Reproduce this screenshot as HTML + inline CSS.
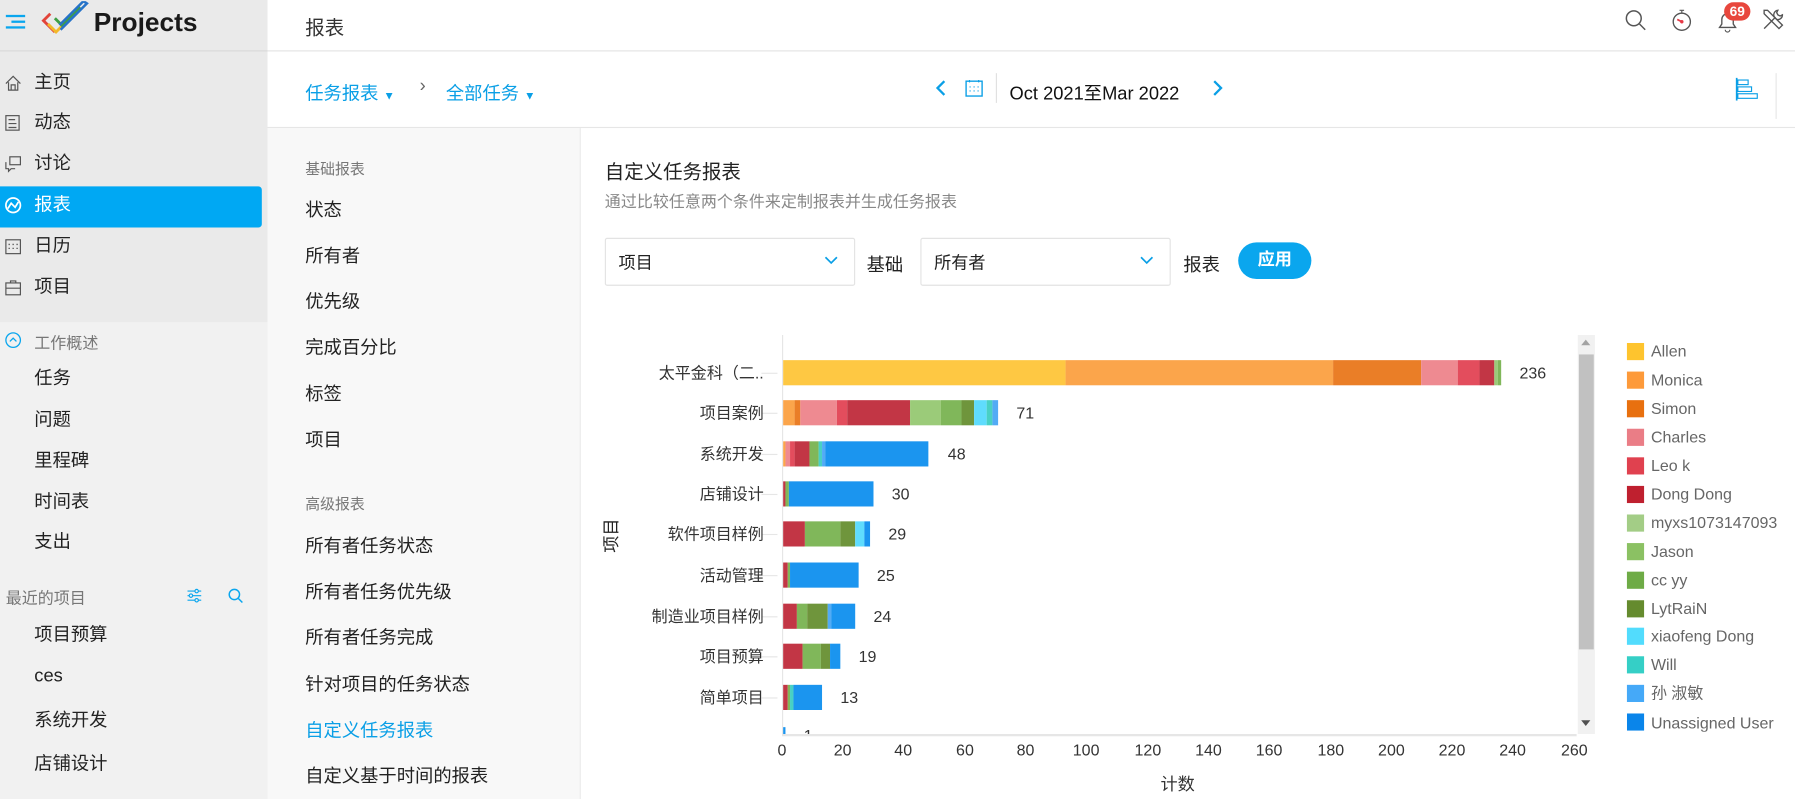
<!DOCTYPE html>
<html><head><meta charset="utf-8">
<style>
html,body{margin:0;padding:0;width:1795px;height:799px;overflow:hidden;background:#fff}
#w{position:absolute;left:0;top:0;width:1570px;height:699px;transform:scale(1.14331);transform-origin:0 0;font-family:"Liberation Sans","Noto Sans CJK SC",sans-serif;color:#222}
.a{position:absolute;white-space:nowrap}
.nav{position:absolute;left:30px;font-size:16px;color:#222;line-height:20px}
.sub{position:absolute;left:267px;font-size:16px;color:#222;line-height:20px}
.ic{position:absolute;left:4px;width:15px;height:15px}
.seg{position:absolute;height:22px}
.lbl{position:absolute;right:902px;font-size:14px;color:#333;line-height:18px;text-align:right}
.val{position:absolute;font-size:14px;color:#333;line-height:18px}
.tick{position:absolute;left:666px;width:14px;height:1px;background:#e6e6e6}
.xl{position:absolute;top:648px;font-size:14px;color:#333;width:40px;text-align:center;margin-left:-20px}
.lg{position:absolute;left:1423px;width:15px;height:15px}
.lt{position:absolute;left:1444px;font-size:14px;color:#666;line-height:16px}
</style></head><body><div id="w">
<div class="a" style="left:0;top:0;width:234px;height:282px;background:#eaeaea"></div>
<div class="a" style="left:0;top:282px;width:234px;height:417px;background:#f1f1f1"></div>
<div class="a" style="left:0;top:44px;width:234px;height:1px;background:#d8d8d8"></div>
<svg class="a" style="left:5px;top:12px" width="18" height="14"><rect x="0" y="1" width="17" height="2" fill="#0aa6ee"/><rect x="5" y="6" width="12" height="2" fill="#0aa6ee"/><rect x="0" y="11" width="17" height="2" fill="#0aa6ee"/></svg>
<svg class="a" style="left:36px;top:1px" width="42" height="36" viewBox="0 0 42 36"><path d="M8 11 L2 17 L12 27" fill="none" stroke="#e2443a" stroke-width="2.5"/><path d="M6 20 L13 27 L19 21" fill="none" stroke="#f2b92a" stroke-width="2.5"/><path d="M12 15 L18 21 L34 5" fill="none" stroke="#3f9f45" stroke-width="2.5"/><path d="M17 25 L40 2 L37 0 L16 21" fill="none" stroke="#2673c9" stroke-width="2.2"/></svg>
<div class="a" style="left:82px;top:6px;font-size:23px;font-weight:bold;color:#1a1a1a">Projects</div>
<div class="a" style="left:0;top:163px;width:229px;height:36px;background:#00a8f3;border-radius:0 3px 3px 0"></div>
<svg class="ic" style="top:65px" viewBox="0 0 13 13"><path d="M1 7 L6.5 1.5 L12 7 M3 6 V12 H10 V6 M5 12 V8 H8 V12" fill="none" stroke="#555" stroke-width="0.9"/></svg>
<svg class="ic" style="top:100px" viewBox="0 0 13 13"><rect x="1" y="1" width="10" height="11" fill="none" stroke="#555" stroke-width="0.9"/><path d="M3 4H8 M3 7H9 M3 10H9" stroke="#555" stroke-width="0.9"/></svg>
<svg class="ic" style="top:136px" viewBox="0 0 13 13"><rect x="4" y="1" width="8" height="6" fill="none" stroke="#555" stroke-width="0.9"/><path d="M1 5 V10 H3 V12 L5 10 H8" fill="none" stroke="#555" stroke-width="0.9"/></svg>
<svg class="ic" style="top:172px" viewBox="0 0 13 13"><circle cx="6.5" cy="6.5" r="5.5" fill="none" stroke="#fff" stroke-width="1.3"/><path d="M2.5 9 L5 5 L8 8 L10.5 4" fill="none" stroke="#fff" stroke-width="1.3"/></svg>
<svg class="ic" style="top:208px" viewBox="0 0 13 13"><rect x="1" y="1.5" width="11" height="10.5" fill="none" stroke="#555" stroke-width="0.9"/><path d="M3 5h1M6 5h1M9 5h1M3 8h1M6 8h1M9 8h1" stroke="#555"/></svg>
<svg class="ic" style="top:244px" viewBox="0 0 13 13"><rect x="1" y="3" width="11" height="9" fill="none" stroke="#555" stroke-width="0.9"/><path d="M4.5 3V1.5H8.5V3M1 7H12" fill="none" stroke="#555" stroke-width="0.9"/></svg>
<div class="nav" style="top:63px">主页</div>
<div class="nav" style="top:98px">动态</div>
<div class="nav" style="top:134px">讨论</div>
<div class="nav" style="top:170px;color:#fff">报表</div>
<div class="nav" style="top:206px">日历</div>
<div class="nav" style="top:242px">项目</div>
<svg class="ic" style="top:290px" viewBox="0 0 13 13"><circle cx="6.5" cy="6.5" r="5.5" fill="none" stroke="#0aa6ee"/><path d="M4 7.5 L6.5 5 L9 7.5" fill="none" stroke="#0aa6ee"/></svg>
<div class="a" style="left:30px;top:290px;font-size:14px;color:#777">工作概述</div>
<div class="nav" style="top:322px">任务</div>
<div class="nav" style="top:358px">问题</div>
<div class="nav" style="top:394px">里程碑</div>
<div class="nav" style="top:430px">时间表</div>
<div class="nav" style="top:465px">支出</div>
<div class="a" style="left:5px;top:513px;font-size:14px;color:#777">最近的项目</div>
<svg class="a" style="left:163px;top:514px" width="14" height="13"><path d="M1 3H13M1 7H13M1 11H13" stroke="#0aa6ee"/><circle cx="9" cy="3" r="1.5" fill="#f1f1f1" stroke="#0aa6ee"/><circle cx="4" cy="7" r="1.5" fill="#f1f1f1" stroke="#0aa6ee"/><circle cx="9" cy="11" r="1.5" fill="#f1f1f1" stroke="#0aa6ee"/></svg>
<svg class="a" style="left:199px;top:514px" width="14" height="14"><circle cx="6" cy="6" r="4.5" fill="none" stroke="#0aa6ee" stroke-width="1.3"/><path d="M9.5 9.5L13 13" stroke="#0aa6ee" stroke-width="1.3"/></svg>
<div class="nav" style="top:546px">项目预算</div>
<div class="nav" style="top:582px">ces</div>
<div class="nav" style="top:621px">系统开发</div>
<div class="nav" style="top:659px">店铺设计</div>

<div class="a" style="left:234px;top:44px;width:1336px;height:1px;background:#e3e3e3"></div>
<div class="a" style="left:267px;top:10px;font-size:17px;color:#333">报表</div>
<svg class="a" style="left:1421px;top:8px" width="20" height="20"><circle cx="8" cy="8" r="6.5" fill="none" stroke="#555" stroke-width="1.3"/><path d="M13 13L18 18" stroke="#555" stroke-width="1.3"/></svg>
<svg class="a" style="left:1461px;top:7px" width="20" height="22"><circle cx="10" cy="12" r="7.5" fill="none" stroke="#555" stroke-width="1.2"/><path d="M8 2H12M10 2V4.5" stroke="#555"/><path d="M6 10L10 12" stroke="#e63946" stroke-width="1.5"/><circle cx="10" cy="12" r="1.5" fill="#e63946"/></svg>
<svg class="a" style="left:1500px;top:8px" width="22" height="22"><path d="M4 16H18L16 13V9A5 5 0 0 0 6 9V13Z" fill="none" stroke="#555" stroke-width="1.2"/><path d="M9 18A2 2 0 0 0 13 18" fill="none" stroke="#555"/></svg>
<div class="a" style="left:1508px;top:2px;width:23px;height:16px;border-radius:8px;background:#e8473d;color:#fff;font-size:12px;font-weight:bold;text-align:center;line-height:16px">69</div>
<svg class="a" style="left:1541px;top:7px" width="20" height="20"><path d="M2 18L12 8M14 2A4 4 0 0 0 11 8L13 10A4 4 0 0 0 18 6L16 7L14 6L13 4Z" fill="none" stroke="#555" stroke-width="1.2"/><path d="M2 2L5 2L18 15L15 18L2 5Z" fill="none" stroke="#555" stroke-width="1.2"/></svg>

<div class="a" style="left:234px;top:111px;width:1336px;height:1px;background:#e6e6e6"></div>
<div class="a" style="left:267px;top:68px;font-size:16px;color:#0a9fe6">任务报表 <span style="font-size:10px">▼</span></div>
<div class="a" style="left:367px;top:67px;font-size:16px;color:#666">›</div>
<div class="a" style="left:390px;top:68px;font-size:16px;color:#0a9fe6">全部任务 <span style="font-size:10px">▼</span></div>
<svg class="a" style="left:818px;top:69px" width="10" height="16"><path d="M8 2L2 8L8 14" fill="none" stroke="#0a9fe6" stroke-width="2"/></svg>
<svg class="a" style="left:844px;top:69px" width="16" height="16"><rect x="1" y="2" width="14" height="13" fill="none" stroke="#0a9fe6" stroke-width="1.2"/><path d="M4 7h1M7.5 7h1M11 7h1M4 10.5h1M7.5 10.5h1M11 10.5h1M4 1V3M12 1V3" stroke="#0a9fe6"/></svg>
<div class="a" style="left:871px;top:64px;width:1px;height:26px;background:#e0e0e0"></div>
<div class="a" style="left:883px;top:68px;font-size:16px;color:#111">Oct 2021至Mar 2022</div>
<svg class="a" style="left:1060px;top:69px" width="10" height="16"><path d="M2 2L8 8L2 14" fill="none" stroke="#0a9fe6" stroke-width="2"/></svg>
<svg class="a" style="left:1518px;top:68px" width="20" height="20"><path d="M1 0V20" stroke="#0a9fe6" stroke-width="1.5"/><rect x="2" y="2" width="9" height="4" fill="none" stroke="#0a9fe6"/><rect x="2" y="8" width="12" height="4" fill="none" stroke="#0a9fe6"/><rect x="2" y="14" width="17" height="4" fill="none" stroke="#0a9fe6"/></svg>
<div class="a" style="left:1553px;top:64px;width:1px;height:40px;background:#e6e6e6"></div>

<div class="a" style="left:234px;top:112px;width:273px;height:587px;background:#f8f8f8;border-right:1px solid #ececec"></div>
<div class="a" style="left:267px;top:137px;font-size:13px;color:#777">基础报表</div>
<div class="sub" style="top:175px">状态</div>
<div class="sub" style="top:215px">所有者</div>
<div class="sub" style="top:255px">优先级</div>
<div class="sub" style="top:295px">完成百分比</div>
<div class="sub" style="top:336px">标签</div>
<div class="sub" style="top:376px">项目</div>
<div class="a" style="left:267px;top:430px;font-size:13px;color:#777">高级报表</div>
<div class="sub" style="top:469px">所有者任务状态</div>
<div class="sub" style="top:509px">所有者任务优先级</div>
<div class="sub" style="top:549px">所有者任务完成</div>
<div class="sub" style="top:590px">针对项目的任务状态</div>
<div class="sub" style="top:630px;color:#0a9fe6">自定义任务报表</div>
<div class="sub" style="top:670px">自定义基于时间的报表</div>

<div class="a" style="left:529px;top:136px;font-size:17px;color:#222">自定义任务报表</div>
<div class="a" style="left:529px;top:166px;font-size:14px;color:#888">通过比较任意两个条件来定制报表并生成任务报表</div>
<div class="a" style="left:529px;top:208px;width:217px;height:40px;border:1px solid #e3e3e3;border-radius:2px"></div>
<div class="a" style="left:541px;top:219px;font-size:15px">项目</div>
<svg class="a" style="left:721px;top:224px" width="12" height="8"><path d="M1 1L6 6L11 1" fill="none" stroke="#0a9fe6" stroke-width="1.5"/></svg>
<div class="a" style="left:758px;top:218px;font-size:16px">基础</div>
<div class="a" style="left:805px;top:208px;width:217px;height:40px;border:1px solid #e3e3e3;border-radius:2px"></div>
<div class="a" style="left:817px;top:219px;font-size:15px">所有者</div>
<svg class="a" style="left:997px;top:224px" width="12" height="8"><path d="M1 1L6 6L11 1" fill="none" stroke="#0a9fe6" stroke-width="1.5"/></svg>
<div class="a" style="left:1035px;top:218px;font-size:16px">报表</div>
<div class="a" style="left:1083px;top:212px;width:64px;height:32px;border-radius:16px;background:#0aa6ee;color:#fff;font-size:15px;font-weight:bold;text-align:center;line-height:32px">应用</div>

<div class="a" style="left:684px;top:293px;width:1px;height:349px;background:#e6e6e6"></div>
<div class="a" style="left:684px;top:642px;width:695px;height:2px;background:#e6e6e6"></div>
<div class="a" style="left:1380px;top:293px;width:15px;height:349px;background:#f1f1f1"></div>
<div class="a" style="left:1381px;top:310px;width:13px;height:258px;background:#c1c1c1"></div>
<div class="a" style="left:1383px;top:297px;width:0;height:0;border:4px solid transparent;border-bottom:5px solid #a3a3a3;border-top:0"></div>
<div class="a" style="left:1383px;top:630px;width:0;height:0;border:4px solid transparent;border-top:5px solid #505050;border-bottom:0"></div>
<div class="a" style="left:519px;top:458px;font-size:15px;transform:rotate(-90deg);transform-origin:center">项目</div>
<div class="a" style="left:1015px;top:675px;font-size:15px;color:#333">计数</div>

<div class="tick" style="top:326px"></div><div class="tick" style="top:361px"></div><div class="tick" style="top:397px"></div><div class="tick" style="top:432px"></div><div class="tick" style="top:467px"></div><div class="tick" style="top:503px"></div><div class="tick" style="top:539px"></div><div class="tick" style="top:574px"></div><div class="tick" style="top:610px"></div>
<div class="lbl" style="top:317px">太平金科（二..</div>
<div class="lbl" style="top:352px">项目案例</div>
<div class="lbl" style="top:388px">系统开发</div>
<div class="lbl" style="top:423px">店铺设计</div>
<div class="lbl" style="top:458px">软件项目样例</div>
<div class="lbl" style="top:494px">活动管理</div>
<div class="lbl" style="top:530px">制造业项目样例</div>
<div class="lbl" style="top:565px">项目预算</div>
<div class="lbl" style="top:601px">简单项目</div>

<div class="seg" style="top:315px;left:685px;width:247px;background:#fec843"></div>
<div class="seg" style="top:315px;left:932px;width:234px;background:#fba54b"></div>
<div class="seg" style="top:315px;left:1166px;width:77px;background:#ea7e27"></div>
<div class="seg" style="top:315px;left:1243px;width:32px;background:#ee8a91"></div>
<div class="seg" style="top:315px;left:1275px;width:19px;background:#e34d5d"></div>
<div class="seg" style="top:315px;left:1294px;width:13px;background:#c23645"></div>
<div class="seg" style="top:315px;left:1307px;width:3px;background:#9bcb79"></div>
<div class="seg" style="top:315px;left:1310px;width:3px;background:#80b75a"></div>
<div class="val" style="top:317px;left:1329px">236</div>
<div class="seg" style="top:350px;left:685px;width:10px;background:#fba54b"></div>
<div class="seg" style="top:350px;left:695px;width:5px;background:#ea7e27"></div>
<div class="seg" style="top:350px;left:700px;width:32px;background:#ee8a91"></div>
<div class="seg" style="top:350px;left:732px;width:9px;background:#e34d5d"></div>
<div class="seg" style="top:350px;left:741px;width:55px;background:#c23645"></div>
<div class="seg" style="top:350px;left:796px;width:27px;background:#9bcb79"></div>
<div class="seg" style="top:350px;left:823px;width:18px;background:#80b75a"></div>
<div class="seg" style="top:350px;left:841px;width:11px;background:#6f953c"></div>
<div class="seg" style="top:350px;left:852px;width:11px;background:#5fdcfd"></div>
<div class="seg" style="top:350px;left:863px;width:5px;background:#48d0c4"></div>
<div class="seg" style="top:350px;left:868px;width:5px;background:#52abf5"></div>
<div class="val" style="top:352px;left:889px">71</div>
<div class="seg" style="top:386px;left:685px;width:2px;background:#fba54b"></div>
<div class="seg" style="top:386px;left:687px;width:4px;background:#ee8a91"></div>
<div class="seg" style="top:386px;left:691px;width:4px;background:#e34d5d"></div>
<div class="seg" style="top:386px;left:695px;width:13px;background:#c23645"></div>
<div class="seg" style="top:386px;left:708px;width:8px;background:#80b75a"></div>
<div class="seg" style="top:386px;left:716px;width:3px;background:#48d0c4"></div>
<div class="seg" style="top:386px;left:719px;width:3px;background:#52abf5"></div>
<div class="seg" style="top:386px;left:722px;width:90px;background:#1b95ef"></div>
<div class="val" style="top:388px;left:829px">48</div>
<div class="seg" style="top:421px;left:685px;width:2px;background:#c23645"></div>
<div class="seg" style="top:421px;left:687px;width:3px;background:#80b75a"></div>
<div class="seg" style="top:421px;left:690px;width:74px;background:#1b95ef"></div>
<div class="val" style="top:423px;left:780px">30</div>
<div class="seg" style="top:456px;left:685px;width:19px;background:#c23645"></div>
<div class="seg" style="top:456px;left:704px;width:31px;background:#80b75a"></div>
<div class="seg" style="top:456px;left:735px;width:13px;background:#6f953c"></div>
<div class="seg" style="top:456px;left:748px;width:8px;background:#5fdcfd"></div>
<div class="seg" style="top:456px;left:756px;width:5px;background:#1b95ef"></div>
<div class="val" style="top:458px;left:777px">29</div>
<div class="seg" style="top:492px;left:685px;width:4px;background:#c23645"></div>
<div class="seg" style="top:492px;left:689px;width:2px;background:#80b75a"></div>
<div class="seg" style="top:492px;left:691px;width:60px;background:#1b95ef"></div>
<div class="val" style="top:494px;left:767px">25</div>
<div class="seg" style="top:528px;left:685px;width:12px;background:#c23645"></div>
<div class="seg" style="top:528px;left:697px;width:9px;background:#80b75a"></div>
<div class="seg" style="top:528px;left:706px;width:18px;background:#6f953c"></div>
<div class="seg" style="top:528px;left:724px;width:3px;background:#52abf5"></div>
<div class="seg" style="top:528px;left:727px;width:21px;background:#1b95ef"></div>
<div class="val" style="top:530px;left:764px">24</div>
<div class="seg" style="top:563px;left:685px;width:17px;background:#c23645"></div>
<div class="seg" style="top:563px;left:702px;width:16px;background:#80b75a"></div>
<div class="seg" style="top:563px;left:718px;width:8px;background:#6f953c"></div>
<div class="seg" style="top:563px;left:726px;width:9px;background:#1b95ef"></div>
<div class="val" style="top:565px;left:751px">19</div>
<div class="seg" style="top:599px;left:685px;width:4px;background:#c23645"></div>
<div class="seg" style="top:599px;left:689px;width:2px;background:#80b75a"></div>
<div class="seg" style="top:599px;left:691px;width:3px;background:#48d0c4"></div>
<div class="seg" style="top:599px;left:694px;width:25px;background:#1b95ef"></div>
<div class="val" style="top:601px;left:735px">13</div>
<div class="a" style="left:685px;top:636px;width:2px;height:6px;background:#1b95ef"></div>
<div class="a" style="left:703px;top:634px;height:8px;overflow:hidden;font-size:14px;color:#333;line-height:18px">1</div>

<div class="xl" style="left:684px">0</div><div class="xl" style="left:737px">20</div><div class="xl" style="left:790px">40</div><div class="xl" style="left:844px">60</div><div class="xl" style="left:897px">80</div><div class="xl" style="left:950px">100</div><div class="xl" style="left:1004px">120</div><div class="xl" style="left:1057px">140</div><div class="xl" style="left:1110px">160</div><div class="xl" style="left:1164px">180</div><div class="xl" style="left:1217px">200</div><div class="xl" style="left:1270px">220</div><div class="xl" style="left:1323px">240</div><div class="xl" style="left:1377px">260</div>

<div class="lg" style="top:300px;background:#fec42e"></div><div class="lt" style="top:299px">Allen</div>
<div class="lg" style="top:325px;background:#fd9a3a"></div><div class="lt" style="top:324px">Monica</div>
<div class="lg" style="top:350px;background:#e8700f"></div><div class="lt" style="top:349px">Simon</div>
<div class="lg" style="top:375px;background:#ea7d86"></div><div class="lt" style="top:374px">Charles</div>
<div class="lg" style="top:400px;background:#e0414f"></div><div class="lt" style="top:399px">Leo k</div>
<div class="lg" style="top:425px;background:#bf202f"></div><div class="lt" style="top:424px">Dong Dong</div>
<div class="lg" style="top:450px;background:#a3cd86"></div><div class="lt" style="top:449px">myxs1073147093</div>
<div class="lg" style="top:475px;background:#8bc163"></div><div class="lt" style="top:474px">Jason</div>
<div class="lg" style="top:500px;background:#6eab46"></div><div class="lt" style="top:499px">cc yy</div>
<div class="lg" style="top:525px;background:#658b2e"></div><div class="lt" style="top:524px">LytRaiN</div>
<div class="lg" style="top:549px;background:#52dcfd"></div><div class="lt" style="top:548px">xiaofeng Dong</div>
<div class="lg" style="top:574px;background:#35cfc6"></div><div class="lt" style="top:573px">Will</div>
<div class="lg" style="top:599px;background:#45a9f8"></div><div class="lt" style="top:598px">孙 淑敏</div>
<div class="a" style="left:1423px;top:624px;width:147px;height:16px;overflow:hidden"><div style="position:absolute;left:0;top:0;width:15px;height:15px;background:#0a85ea"></div><div style="position:absolute;left:21px;top:0;font-size:14px;color:#666;line-height:16px;white-space:nowrap">Unassigned User</div></div>
</div></body></html>
